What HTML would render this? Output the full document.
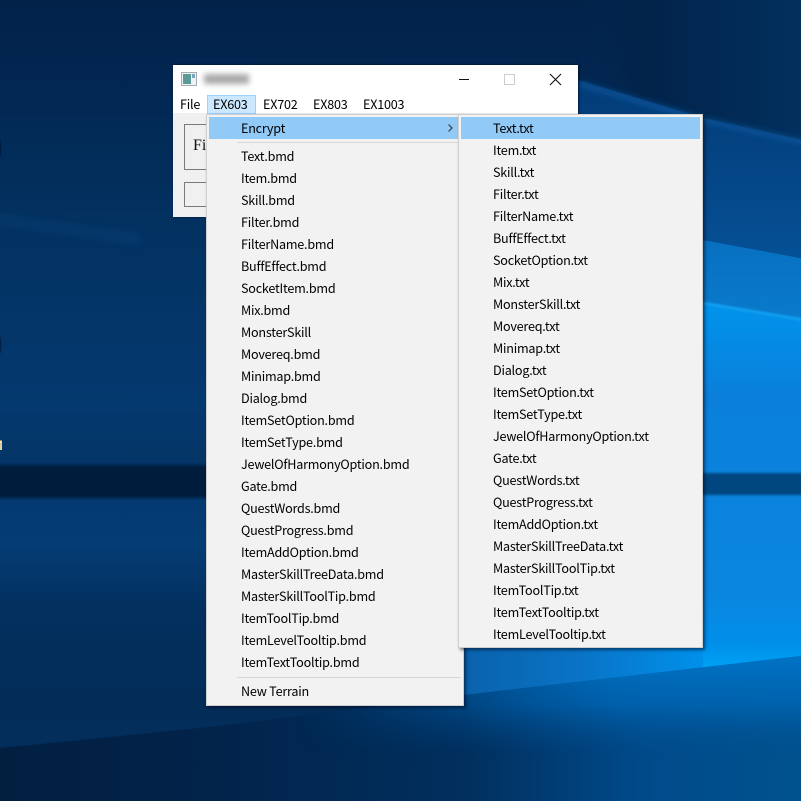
<!DOCTYPE html>
<html><head><meta charset="utf-8"><style>
html,body{margin:0;padding:0;width:801px;height:801px;overflow:hidden;background:#03305f}
#s{position:relative;width:801px;height:801px;overflow:hidden;font-family:"Noto Sans CJK SC","Liberation Sans",sans-serif;font-size:12.6px;letter-spacing:-.22px;color:#000}
#bg{position:absolute;left:0;top:0}
.a{position:absolute}
.win{left:173px;top:65px;width:405px;height:152px;background:#f0f0f0;box-shadow:1px 0 2px rgba(0,0,20,.6)}
.tb{left:173px;top:65px;width:405px;height:48px;background:#fff}
.mb{position:absolute;top:88px;line-height:32px;height:32px;white-space:nowrap}
.menu{background:#f2f2f2;border:1px solid #cfcfcf;box-sizing:border-box;box-shadow:2px 2px 3px rgba(0,10,30,.55)}
.it{position:absolute;line-height:22px;height:22px;white-space:nowrap}
.hl{background:#91c9f7}
.sep{background:#d7d7d7;height:1px}
</style></head><body><div id="s">
<svg id="bg" width="801" height="801" viewBox="0 0 801 801">
<defs>
<filter id="b3" x="-10%" y="-50%" width="120%" height="200%"><feGaussianBlur stdDeviation="3"/></filter>
<filter id="b1" x="-10%" y="-50%" width="120%" height="200%"><feGaussianBlur stdDeviation="1.200"/></filter>
<linearGradient id="L" x1="0" y1="0" x2="0" y2="801" gradientUnits="userSpaceOnUse">
<stop offset="0" stop-color="#02224a"/><stop offset=".09" stop-color="#022650"/><stop offset=".27" stop-color="#033160"/><stop offset=".5" stop-color="#04396f"/><stop offset=".575" stop-color="#043567"/><stop offset=".625" stop-color="#043a72"/><stop offset=".68" stop-color="#043c74"/><stop offset=".76" stop-color="#03305f"/><stop offset=".88" stop-color="#032c58"/><stop offset="1" stop-color="#033060"/>
</linearGradient>
<linearGradient id="T" x1="578" y1="0" x2="801" y2="0" gradientUnits="userSpaceOnUse"><stop offset="0" stop-color="#022850" stop-opacity="0"/><stop offset=".3" stop-color="#02234a"/><stop offset="1" stop-color="#02305e"/></linearGradient>
<linearGradient id="A" x1="0" y1="90" x2="0" y2="250" gradientUnits="userSpaceOnUse"><stop offset="0" stop-color="#043c78"/><stop offset="1" stop-color="#054f94"/></linearGradient>
<linearGradient id="B" x1="0" y1="240" x2="0" y2="318" gradientUnits="userSpaceOnUse"><stop offset="0" stop-color="#0870c0"/><stop offset="1" stop-color="#0a7acc"/></linearGradient>
<linearGradient id="C" x1="0" y1="300" x2="0" y2="670" gradientUnits="userSpaceOnUse"><stop offset="0" stop-color="#0094ec"/><stop offset=".25" stop-color="#0a80dc"/><stop offset=".8" stop-color="#0a86e0"/><stop offset=".93" stop-color="#0090ea"/><stop offset="1" stop-color="#00a2f6"/></linearGradient>
<linearGradient id="M" x1="464" y1="0" x2="703" y2="0" gradientUnits="userSpaceOnUse"><stop offset="0" stop-color="#0a62ac"/><stop offset=".45" stop-color="#0a72c4"/><stop offset="1" stop-color="#0090ea"/></linearGradient>
<linearGradient id="Bt" x1="0" y1="0" x2="801" y2="0" gradientUnits="userSpaceOnUse"><stop offset="0" stop-color="#021f40"/><stop offset=".26" stop-color="#02234a"/><stop offset=".58" stop-color="#012f5e"/><stop offset=".8" stop-color="#004a8a"/><stop offset="1" stop-color="#00528f"/></linearGradient>
<linearGradient id="Bv" x1="0" y1="655" x2="0" y2="755" gradientUnits="userSpaceOnUse"><stop offset="0" stop-color="#0074c6"/><stop offset=".5" stop-color="#0066b4" stop-opacity=".8"/><stop offset="1" stop-color="#00508f" stop-opacity="0"/></linearGradient>
<linearGradient id="mk" x1="300" y1="0" x2="620" y2="0" gradientUnits="userSpaceOnUse"><stop offset="0" stop-color="#000"/><stop offset="1" stop-color="#fff"/></linearGradient>
<mask id="m1" maskUnits="userSpaceOnUse" x="0" y="0" width="801" height="801"><rect width="801" height="801" fill="url(#mk)"/></mask>
</defs>
<rect width="801" height="801" fill="url(#L)"/>
<rect x="578" width="223" height="140" fill="url(#T)"/>
<polygon points="-10,212 140,233 140,246 -10,224" fill="#0a4c88" opacity=".22" filter="url(#b3)"/>
<polygon points="578,80 703,118 811,142 811,260 703,240 578,218" fill="url(#A)"/>
<polyline points="580,84 703,120 811,144" fill="none" stroke="#105ca4" stroke-width="6" filter="url(#b3)" opacity=".6"/>
<polygon points="703,240 811,260 811,322 703,302" fill="url(#B)"/>
<polygon points="703,302 811,320 811,700 703,700" fill="url(#C)"/>
<polyline points="703,303 811,321" fill="none" stroke="#1aa4f4" stroke-width="2" filter="url(#b1)"/>
<rect x="695" y="473" width="120" height="22" fill="#04477f" filter="url(#b1)"/>
<rect x="-12" y="465" width="225" height="33" fill="#021c3c" filter="url(#b1)"/>
<rect x="464" y="640" width="239" height="70" fill="url(#M)"/>
<polygon points="0,748 210,727 464,695 801,656 801,801 0,801" fill="url(#Bt)"/>
<polygon points="0,748 210,727 464,695 801,656 801,801 0,801" fill="url(#Bv)" mask="url(#m1)"/>
<rect x="-3" y="141" width="4" height="14" fill="#02182e" filter="url(#b1)"/>
<rect x="-3" y="338" width="4" height="14" fill="#02182e" filter="url(#b1)"/>
</svg>
<div class="a" style="left:-8px;top:436px;font-size:13px;font-weight:700;letter-spacing:0;line-height:18px;color:#ffe6a8">M</div>

<div class="a win"></div>
<div class="a tb"></div>
<svg class="a" style="left:181px;top:72px" width="16" height="14"><rect x=".5" y=".5" width="15" height="13" fill="#eef2f2" stroke="#a0aeb2"/><rect x="2" y="2" width="8" height="10" fill="#5a9a98"/><rect x="11" y="2" width="3" height="4" fill="#7aa5c0"/></svg>
<div class="a" style="left:204px;top:74px;width:45px;height:10px;background:#a8a8a8;filter:blur(3px)"></div>
<div class="a" style="left:459px;top:79px;width:10px;height:1px;background:#111"></div>
<div class="a" style="left:504px;top:74px;width:9px;height:9px;border:1px solid #ccc"></div>
<svg class="a" style="left:549px;top:73px" width="13" height="13"><path d="M1 1L12 12M12 1L1 12" stroke="#111" stroke-width="1.100" fill="none"/></svg>
<div class="a" style="left:207px;top:95px;width:47px;height:17px;background:#cce8ff;border:1px solid #99d1ff"></div>
<div class="mb" style="left:180px">File</div>
<div class="mb" style="left:213px">EX603</div>
<div class="mb" style="left:263px">EX702</div>
<div class="mb" style="left:313px">EX803</div>
<div class="mb" style="left:363px">EX1003</div>
<div class="a" style="left:184px;top:124px;width:60px;height:44px;border:1px solid #7a7a7a"></div>
<div class="a" style="left:193px;top:136px;font:16px/20px 'Liberation Serif',serif;letter-spacing:0;color:#111">Fi</div>
<div class="a" style="left:184px;top:182px;width:60px;height:23px;border:1px solid #7a7a7a;background:#f0f0f0"></div>

<div class="a menu" style="left:206px;top:114px;width:258px;height:592px"></div>
<div class="a hl" style="left:209px;top:117px;width:250px;height:22px"></div>
<div class="a sep" style="left:237px;top:142px;width:224px"></div>
<div class="a sep" style="left:237px;top:677px;width:224px"></div>
<svg class="a" style="left:447px;top:123px" width="7" height="10"><path d="M1.500 1.500L5 5L1.500 8.500" stroke="#333" stroke-width="1.100" fill="none"/></svg>
<div class="it" style="left:241px;top:117px">Encrypt</div>
<div class="it" style="left:241px;top:145px">Text.bmd</div>
<div class="it" style="left:241px;top:167px">Item.bmd</div>
<div class="it" style="left:241px;top:189px">Skill.bmd</div>
<div class="it" style="left:241px;top:211px">Filter.bmd</div>
<div class="it" style="left:241px;top:233px">FilterName.bmd</div>
<div class="it" style="left:241px;top:255px">BuffEffect.bmd</div>
<div class="it" style="left:241px;top:277px">SocketItem.bmd</div>
<div class="it" style="left:241px;top:299px">Mix.bmd</div>
<div class="it" style="left:241px;top:321px">MonsterSkill</div>
<div class="it" style="left:241px;top:343px">Movereq.bmd</div>
<div class="it" style="left:241px;top:365px">Minimap.bmd</div>
<div class="it" style="left:241px;top:387px">Dialog.bmd</div>
<div class="it" style="left:241px;top:409px">ItemSetOption.bmd</div>
<div class="it" style="left:241px;top:431px">ItemSetType.bmd</div>
<div class="it" style="left:241px;top:453px">JewelOfHarmonyOption.bmd</div>
<div class="it" style="left:241px;top:475px">Gate.bmd</div>
<div class="it" style="left:241px;top:497px">QuestWords.bmd</div>
<div class="it" style="left:241px;top:519px">QuestProgress.bmd</div>
<div class="it" style="left:241px;top:541px">ItemAddOption.bmd</div>
<div class="it" style="left:241px;top:563px">MasterSkillTreeData.bmd</div>
<div class="it" style="left:241px;top:585px">MasterSkillToolTip.bmd</div>
<div class="it" style="left:241px;top:607px">ItemToolTip.bmd</div>
<div class="it" style="left:241px;top:629px">ItemLevelTooltip.bmd</div>
<div class="it" style="left:241px;top:651px">ItemTextTooltip.bmd</div>
<div class="it" style="left:241px;top:680px">New Terrain</div>

<div class="a menu" style="left:458px;top:114px;width:245px;height:534px"></div>
<div class="a hl" style="left:461px;top:117px;width:239px;height:22px"></div>
<div class="it" style="left:493px;top:116.500px">Text.txt</div>
<div class="it" style="left:493px;top:138.500px">Item.txt</div>
<div class="it" style="left:493px;top:160.500px">Skill.txt</div>
<div class="it" style="left:493px;top:182.500px">Filter.txt</div>
<div class="it" style="left:493px;top:204.500px">FilterName.txt</div>
<div class="it" style="left:493px;top:226.500px">BuffEffect.txt</div>
<div class="it" style="left:493px;top:248.500px">SocketOption.txt</div>
<div class="it" style="left:493px;top:270.500px">Mix.txt</div>
<div class="it" style="left:493px;top:292.500px">MonsterSkill.txt</div>
<div class="it" style="left:493px;top:314.500px">Movereq.txt</div>
<div class="it" style="left:493px;top:336.500px">Minimap.txt</div>
<div class="it" style="left:493px;top:358.500px">Dialog.txt</div>
<div class="it" style="left:493px;top:380.500px">ItemSetOption.txt</div>
<div class="it" style="left:493px;top:402.500px">ItemSetType.txt</div>
<div class="it" style="left:493px;top:424.500px">JewelOfHarmonyOption.txt</div>
<div class="it" style="left:493px;top:446.500px">Gate.txt</div>
<div class="it" style="left:493px;top:468.500px">QuestWords.txt</div>
<div class="it" style="left:493px;top:490.500px">QuestProgress.txt</div>
<div class="it" style="left:493px;top:512.500px">ItemAddOption.txt</div>
<div class="it" style="left:493px;top:534.500px">MasterSkillTreeData.txt</div>
<div class="it" style="left:493px;top:556.500px">MasterSkillToolTip.txt</div>
<div class="it" style="left:493px;top:578.500px">ItemToolTip.txt</div>
<div class="it" style="left:493px;top:600.500px">ItemTextTooltip.txt</div>
<div class="it" style="left:493px;top:622.500px">ItemLevelTooltip.txt</div>
</div></body></html>
